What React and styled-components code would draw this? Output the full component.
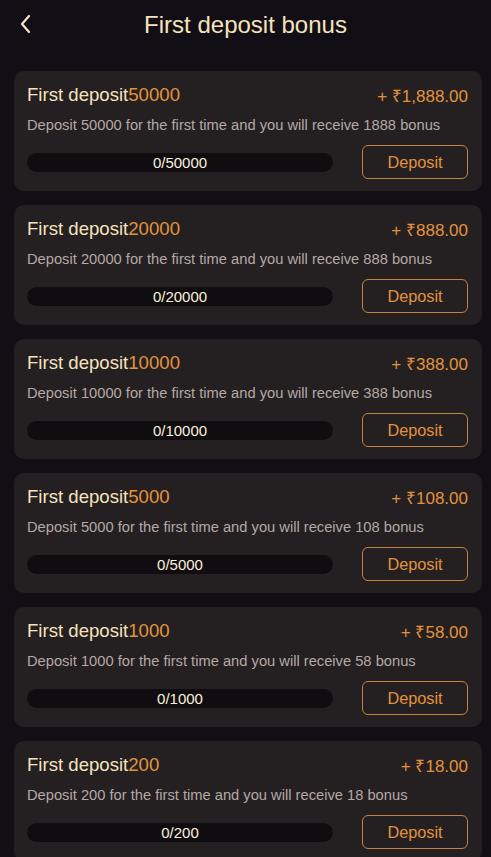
import React from "react";
import styled, { createGlobalStyle } from "styled-components";

const GlobalStyle = createGlobalStyle`
  html, body {
    margin: 0;
    padding: 0;
    background: #110f15;
    font-family: "Liberation Sans", Arial, sans-serif;
  }
`;

const Page = styled.div`
  width: 491px;
  min-height: 857px;
  background: #110f15;
`;

const Header = styled.div`
  height: 49px;
  display: flex;
  align-items: center;
  justify-content: center;
  position: relative;
`;

const Back = styled.button`
  position: absolute;
  left: 14px;
  top: 12px;
  width: 24px;
  height: 24px;
  padding: 0;
  border: none;
  background: none;
  display: flex;
  align-items: center;
  justify-content: center;
`;

const Title = styled.h1`
  margin: 0;
  font-size: 24px;
  font-weight: 400;
  color: #f6e2bd;
`;

const List = styled.div`
  display: flex;
  flex-direction: column;
  gap: 14px;
  padding: 22px 9px 0 14px;
`;

const Card = styled.div`
  background: #242022;
  border-radius: 10px;
  padding: 12px 14px 12px 13px;
  height: 120px;
  box-sizing: border-box;
`;

const TopRow = styled.div`
  display: flex;
  justify-content: space-between;
  align-items: center;
  height: 24px;
`;

const Name = styled.div`
  font-size: 18.6px;
  color: #f6e2bd;
`;

const Accent = styled.span`
  color: #e2923c;
`;

const Amount = styled.div`
  font-size: 17px;
  color: #e2923c;
`;

const Desc = styled.div`
  margin-top: 9px;
  font-size: 14.7px;
  color: #b4a8a2;
  line-height: 18px;
`;

const BottomRow = styled.div`
  margin-top: 11px;
  display: flex;
  align-items: center;
  justify-content: space-between;
`;

const Bar = styled.div`
  width: 306px;
  height: 19px;
  border-radius: 10px;
  background: #0f0d10;
  display: flex;
  align-items: center;
  justify-content: center;
  font-size: 15px;
  color: #fbf0dc;
`;

const DepositButton = styled.button`
  width: 106px;
  height: 34px;
  border: 1px solid #c4823f;
  border-radius: 6px;
  background: transparent;
  color: #e2923c;
  font-family: inherit;
  font-size: 16.3px;
  padding: 0;
`;

const bonuses = [
  { target: 50000, bonus: "1,888.00", raw: 1888 },
  { target: 20000, bonus: "888.00", raw: 888 },
  { target: 10000, bonus: "388.00", raw: 388 },
  { target: 5000, bonus: "108.00", raw: 108 },
  { target: 1000, bonus: "58.00", raw: 58 },
  { target: 200, bonus: "18.00", raw: 18 },
];

const App = () => {
  return (
    <Page>
      <GlobalStyle />
      <Header>
        <Back>
          <svg width="24" height="24" viewBox="0 0 24 24" fill="none">
            <path
              d="M15 4 L8 12 L15 20"
              stroke="#f6e2bd"
              strokeWidth="2.2"
              strokeLinecap="round"
              strokeLinejoin="round"
            />
          </svg>
        </Back>
        <Title>First deposit bonus</Title>
      </Header>
      <List>
        {bonuses.map((b) => (
          <Card key={b.target}>
            <TopRow>
              <Name>
                First deposit<Accent>{b.target}</Accent>
              </Name>
              <Amount>+ ₹{b.bonus}</Amount>
            </TopRow>
            <Desc>
              Deposit {b.target} for the first time and you will receive {b.raw} bonus
            </Desc>
            <BottomRow>
              <Bar>0/{b.target}</Bar>
              <DepositButton>Deposit</DepositButton>
            </BottomRow>
          </Card>
        ))}
      </List>
    </Page>
  );
};

export default App;
